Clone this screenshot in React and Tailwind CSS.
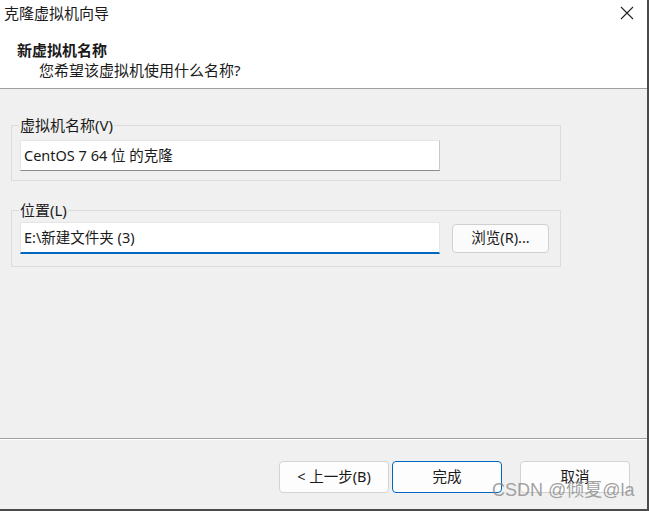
import React from "react";

const font = {
  fontFamily: '"Noto Sans", "Noto Sans CJK SC", sans-serif',
};

function Group({ label, children, className }) {
  return (
    <fieldset className={`border border-[#dcdcdc] px-[8px] ${className}`}>
      <legend className="-ml-[1px] px-[1px] text-[15px] leading-[18px] text-[#1a1a1a]">
        {label}
      </legend>
      {children}
    </fieldset>
  );
}

function WinButton({ children, primary }) {
  return (
    <button
      className={`h-[32px] w-[110px] rounded-[4px] bg-[#fdfdfd] text-[14.5px] text-[#1a1a1a] ${
        primary ? "border border-[#0067c0]" : "border border-[#d3d3d3]"
      }`}
    >
      {children}
    </button>
  );
}

export default function App() {
  return (
    <div
      className="relative flex h-[511px] w-[649px] flex-col overflow-hidden border-r-2 border-b-2 border-[#4a4a4a] bg-[#f0f0f0]"
      style={font}
    >
      {/* Header */}
      <header className="h-[89px] shrink-0 border-b border-[#a0a0a0] bg-white">
        <div className="flex h-[25px] items-center justify-between pl-[4px] pr-[13px]">
          <span className="text-[15px] leading-[20px] text-[#1a1a1a]">克隆虚拟机向导</span>
          <svg width="14" height="14" viewBox="0 0 14 14" className="mt-[1px]">
            <path d="M1 1 L13 13 M13 1 L1 13" stroke="#222" strokeWidth="1.1" fill="none" />
          </svg>
        </div>
        <div className="pt-[15px]">
          <div className="pl-[17px] text-[15px] font-bold leading-[20px] text-[#1a1a1a]">
            新虚拟机名称
          </div>
          <div className="pl-[39px] text-[15px] leading-[20px] text-[#1a1a1a]">
            您希望该虚拟机使用什么名称?
          </div>
        </div>
      </header>

      {/* Main */}
      <main className="flex-1 px-[11px] pr-[86px]">
        <Group label="虚拟机名称(V)" className="mt-[27px] pb-[9px]">
          <div className="mt-[6px] flex h-[31px] w-[420px] items-center border border-[#e6e6e6] border-b-[#8a8a8a] border-r-[#c8c8c8] bg-white pl-[3px] text-[14.5px] text-[#1a1a1a]">
            CentOS 7 64 位 的克隆
          </div>
        </Group>

        <Group label="位置(L)" className="mt-[20px] pb-[12px]">
          <div className="mt-[3px] flex items-center gap-[12px]">
            <div className="flex h-[32px] w-[420px] items-center border border-[#e6e6e6] border-b-2 border-b-[#0067c0] bg-white pl-[3px] text-[14.5px] text-[#1a1a1a]">
              E:\新建文件夹 (3)
            </div>
            <button className="h-[29px] w-[97px] rounded-[4px] border border-[#d0d0d0] bg-[#fbfbfb] text-[14.5px] text-[#1a1a1a]">
              浏览(R)...
            </button>
          </div>
        </Group>
      </main>

      {/* Footer */}
      <footer className="h-[71px] shrink-0">
        <div className="h-px bg-[#a0a0a0]" />
        <div className="h-px bg-white" />
        <div className="flex justify-end pr-[17px] pt-[21px]">
          <WinButton>&lt; 上一步(B)</WinButton>
          <div className="ml-[3px]">
            <WinButton primary>完成</WinButton>
          </div>
          <div className="ml-[18px]">
            <WinButton>取消</WinButton>
          </div>
        </div>
      </footer>

      <span
        className="pointer-events-none absolute left-[492px] top-[479px] text-[18px] leading-[22px] text-[#8a8a8a]/80"
        style={{ fontFamily: '"Liberation Sans", "Noto Sans CJK SC", sans-serif' }}
      >
        CSDN @倾夏@la
      </span>
    </div>
  );
}
